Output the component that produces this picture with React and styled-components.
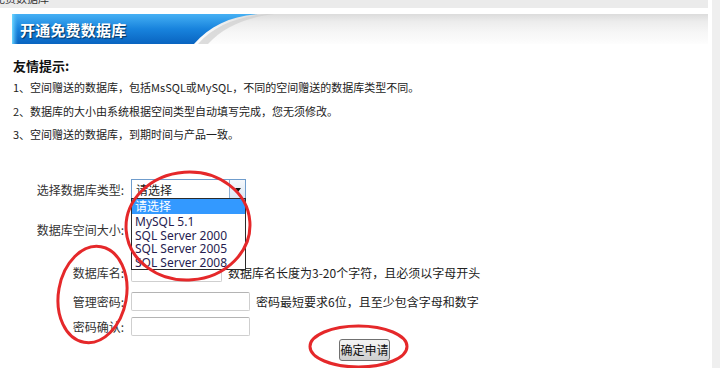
import React from "react";
import styled, { createGlobalStyle } from "styled-components";

const GlobalStyle = createGlobalStyle`
  html, body {
    margin: 0;
    padding: 0;
    background: #fff;
  }
  body {
    font-family: "Noto Sans CJK SC", "Noto Sans", sans-serif;
    color: #222;
  }
`;

const Page = styled.div`
  width: 720px;
  height: 368px;
  display: flex;
  position: relative;
  overflow: hidden;
`;

const Main = styled.div`
  width: 708px;
`;

const SideStrip = styled.div`
  width: 8px;
  margin-left: 4px;
  background: #efefef;
`;

const TopStrip = styled.div`
  height: 8px;
  background: #ebebeb;
  overflow: hidden;
  span {
    display: block;
    margin: -8px 0 0 -6px;
    font-size: 11px;
    line-height: 12px;
    color: #333;
  }
`;

const Banner = styled.div`
  margin: 6px 0 0 12px;
  height: 30px;
  position: relative;
  display: flex;
  align-items: center;
  overflow: hidden;
  background: linear-gradient(#dcdcdc, #ececec 25%, #f6f6f6 60%, #fdfdfd);
`;

const BannerArt = styled.svg`
  position: absolute;
  left: 0;
  top: 0;
`;

const BannerTitle = styled.h1`
  position: relative;
  margin: 0;
  padding-left: 8px;
  font-size: 15px;
  font-weight: bold;
  color: #fff;
  letter-spacing: 0.2px;
  text-shadow: 1px 1px 1px #06345f;
`;

const Tips = styled.div`
  padding: 12px 0 0 13px;
`;

const TipsTitle = styled.div`
  font-size: 13px;
  font-weight: bold;
  line-height: 20px;
  color: #111;
`;

const TipLine = styled.div`
  font-size: 11px;
  line-height: 23.5px;
  color: #222;
`;

const Form = styled.div`
  margin-top: 32px;
  padding-left: 13px;
`;

const Row = styled.div`
  display: grid;
  grid-template-columns: 111px auto;
  column-gap: 7px;
  align-items: center;
  height: ${(p) => p.$h}px;
`;

const Label = styled.div`
  text-align: right;
  font-size: 12px;
  color: #333;
  white-space: nowrap;
`;

const Field = styled.div`
  display: flex;
  align-items: center;
  gap: 6px;
`;

const SelectBox = styled.div`
  position: relative;
  width: 115px;
  height: 21px;
  box-sizing: border-box;
  border: 1px solid #6f9ccc;
  background: #fff;
  display: flex;
  align-items: center;
  padding-left: 4px;
  font-size: 12px;
  color: #222;
`;

const SelectArrow = styled.div`
  margin-left: auto;
  width: 16px;
  height: 100%;
  box-sizing: border-box;
  border-left: 1px solid #8fb0d4;
  background: linear-gradient(#f5f8fc, #dce7f3);
  display: flex;
  align-items: center;
  justify-content: center;
  &::after {
    content: "";
    border-left: 3px solid transparent;
    border-right: 3px solid transparent;
    border-top: 4px solid #111;
  }
`;

const DropList = styled.div`
  position: absolute;
  top: calc(100% - 1px);
  left: -1px;
  width: 115px;
  box-sizing: border-box;
  border: 1px solid #2b2b2b;
  background: #fff;
  z-index: 2;
`;

const Option = styled.div`
  height: ${(p) => (p.$selected ? 15 : 13.5)}px;
  margin-bottom: ${(p) => (p.$selected ? 1 : 0)}px;
  line-height: ${(p) => (p.$selected ? 15 : 13.5)}px;
  padding-left: 3px;
  font-family: "Noto Sans", "Noto Sans CJK SC", sans-serif;
  font-size: 12px;
  color: ${(p) => (p.$selected ? "#fff" : "#261c50")};
  background: ${(p) => (p.$selected ? "#3399ff" : "transparent")};
  white-space: nowrap;
`;

const TextInput = styled.input`
  width: ${(p) => p.$w}px;
  height: 19px;
  box-sizing: border-box;
  margin: 0;
  padding: 0 3px;
  border: 1px solid #cfcfcf;
  border-top-color: #b4b4b4;
  border-radius: 2px;
  background: #fff;
`;

const Hint = styled.span`
  font-size: 12px;
  color: #222;
  white-space: nowrap;
`;

const ButtonRow = styled.div`
  height: 30px;
  display: flex;
  align-items: center;
  justify-content: center;
  padding-left: 8px;
`;

const SubmitButton = styled.button`
  width: 51px;
  height: 22px;
  padding: 0;
  font-family: "Noto Sans CJK SC", sans-serif;
  font-size: 12px;
  color: #111;
  border: 1px solid #707070;
  border-radius: 3px;
  background: linear-gradient(#f3f3f3, #ebebeb 50%, #dcdcdc 50%, #cfcfcf);
`;

const Marks = styled.svg`
  position: absolute;
  left: 0;
  top: 0;
  pointer-events: none;
  z-index: 3;
`;

const options = ["MySQL 5.1", "SQL Server 2000", "SQL Server 2005", "SQL Server 2008"];

export default function App() {
  return (
    <Page>
      <GlobalStyle />
      <Main>
        <TopStrip>
          <span>免费数据库</span>
        </TopStrip>
        <Banner>
          <BannerArt width="262" height="30" viewBox="0 0 262 30">
            <defs>
              <linearGradient id="blue" x1="0" y1="0" x2="0" y2="1">
                <stop offset="0" stopColor="#45b0f4" />
                <stop offset="0.5" stopColor="#1883dd" />
                <stop offset="1" stopColor="#0964c0" />
              </linearGradient>
              <linearGradient id="edge" x1="0" y1="0" x2="1" y2="0">
                <stop offset="0" stopColor="#6fd8ff" />
                <stop offset="1" stopColor="#45b0f4" stopOpacity="0" />
              </linearGradient>
            </defs>
            <path d="M186 30 C202 12 224 3 254 0 H262 C236 3 212 12 196 30 Z" fill="#cfcfcf" opacity="0.7" />
            <path d="M0 0 H246 C218 2 198 12 182 30 H0 Z" fill="url(#blue)" />
            <rect x="0" y="0" width="6" height="30" fill="url(#edge)" />
          </BannerArt>
          <BannerTitle>开通免费数据库</BannerTitle>
        </Banner>
        <Tips>
          <TipsTitle>友情提示:</TipsTitle>
          <TipLine>1、空间赠送的数据库，包括MsSQL或MySQL，不同的空间赠送的数据库类型不同。</TipLine>
          <TipLine>2、数据库的大小由系统根据空间类型自动填写完成，您无须修改。</TipLine>
          <TipLine>3、空间赠送的数据库，到期时间与产品一致。</TipLine>
        </Tips>
        <Form>
          <Row $h={22}>
            <Label>选择数据库类型:</Label>
            <Field>
              <SelectBox>
                请选择
                <SelectArrow />
                <DropList>
                  <Option $selected>请选择</Option>
                  {options.map((o) => (
                    <Option key={o}>{o}</Option>
                  ))}
                </DropList>
              </SelectBox>
            </Field>
          </Row>
          <Row $h={58}>
            <Label>数据库空间大小:</Label>
            <Field />
          </Row>
          <Row $h={28}>
            <Label>数据库名:</Label>
            <Field>
              <TextInput $w={91} />
              <Hint>数据库名长度为3-20个字符，且必须以字母开头</Hint>
            </Field>
          </Row>
          <Row $h={30}>
            <Label>管理密码:</Label>
            <Field>
              <TextInput type="password" $w={119} />
              <Hint>密码最短要求6位，且至少包含字母和数字</Hint>
            </Field>
          </Row>
          <Row $h={18}>
            <Label>密码确认:</Label>
            <Field>
              <TextInput type="password" $w={119} />
            </Field>
          </Row>
          <ButtonRow>
            <SubmitButton>确定申请</SubmitButton>
          </ButtonRow>
        </Form>
      </Main>
      <SideStrip />
      <Marks width="720" height="368" viewBox="0 0 720 368">
        <g fill="none" stroke="#e5282a" strokeWidth="3">
          <ellipse cx="188" cy="226" rx="62" ry="54" transform="rotate(-4 188 226)" />
          <ellipse cx="92.5" cy="294.5" rx="34" ry="48.5" transform="rotate(10 92.5 294.5)" />
          <ellipse cx="358.5" cy="346.5" rx="48.5" ry="20.5" />
        </g>
      </Marks>
    </Page>
  );
}
